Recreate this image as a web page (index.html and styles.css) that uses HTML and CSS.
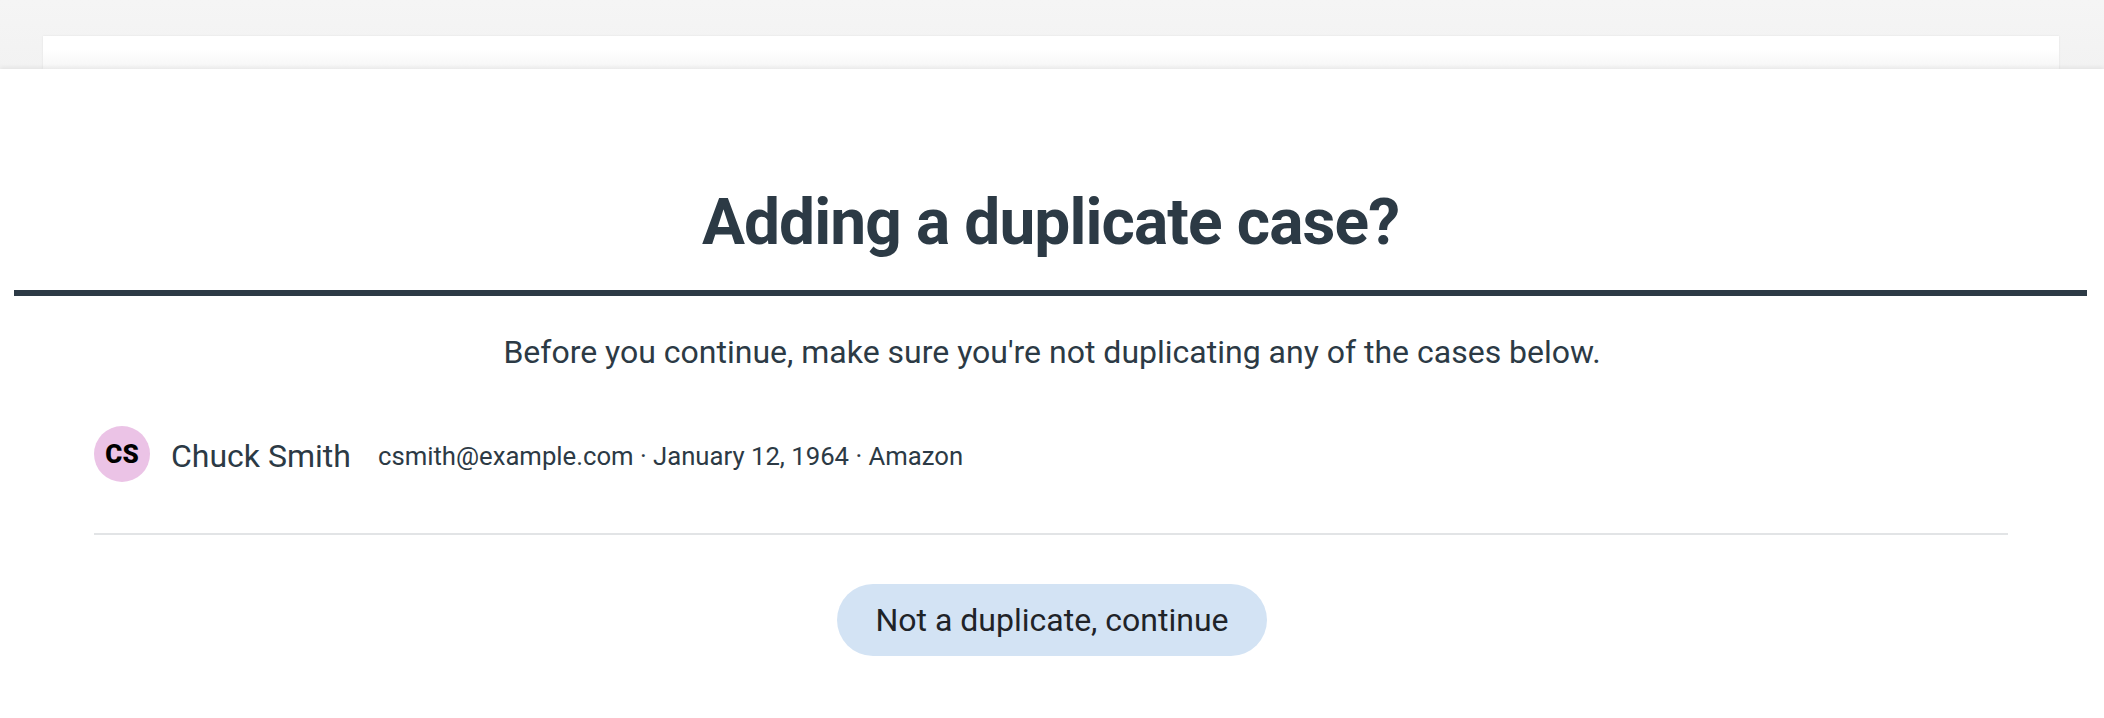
FILE: index.html
```html
<!DOCTYPE html>
<html lang="en">
<head>
<meta charset="utf-8">
<title>Adding a duplicate case?</title>
<link rel="stylesheet" href="styles.css">
</head>
<body>
<div class="backdrop">
  <div class="page-card"></div>
</div>
<main class="sheet">
  <h1 class="title">Adding a duplicate case?</h1>
  <p class="lead">Before you continue, make sure you're not duplicating any of the cases below.</p>
  <ul class="cases">
    <li class="case">
      <span class="avatar">CS</span>
      <span class="name">Chuck Smith</span>
      <span class="meta">csmith@example.com · January 12, 1964 · Amazon</span>
    </li>
  </ul>
  <div class="actions">
    <button class="btn" type="button">Not a duplicate, continue</button>
  </div>
</main>
</body>
</html>
```

FILE: styles.css
```css
* { box-sizing: border-box; }
html, body { margin: 0; padding: 0; }
body {
  background: #f4f4f4;
  font-family: Roboto, "Liberation Sans", Arial, sans-serif;
  color: #2c3a45;
  height: 718px;
  overflow: hidden;
}
.backdrop {
  height: 69px;
  padding: 36px 45px 0 43px;
  background: linear-gradient(#f5f5f5, #f2f2f2);
}
.page-card {
  height: 33px;
  background: linear-gradient(#ffffff 40%, #f6f6f6);
  box-shadow: 0 0 2px rgba(0,0,0,0.08);
}
.sheet {
  position: relative;
  background: #ffffff;
  height: 649px;
  padding-top: 115px;
  box-shadow: 0 -2px 4px rgba(0,0,0,0.06);
}
.title {
  margin: 0 17px 0 14px;
  padding-bottom: 29px;
  border-bottom: 6px solid #2c3a45;
  font-size: 64px;
  line-height: 77px;
  font-weight: 700;
  text-align: center;
  color: #2c3a45;
  letter-spacing: -0.9px;
}
.lead {
  margin: 37px 0 0;
  font-size: 32px;
  line-height: 38px;
  text-align: center;
  color: #2c3a45;
}
.cases {
  list-style: none;
  margin: 55px 96px 0 94px;
  padding: 0 0 51px;
  border-bottom: 2px solid #e2e4e6;
}
.case {
  display: flex;
  align-items: center;
  height: 56px;
}
.avatar {
  flex: none;
  width: 56px;
  height: 56px;
  border-radius: 50%;
  background: #ebc3e6;
  color: #000000;
  font-weight: 900;
  font-size: 26px;
  display: flex;
  align-items: center;
  justify-content: center;
  letter-spacing: 0.2px;
}
.name {
  margin-left: 21px;
  margin-top: 3px;
  font-size: 32px;
  color: #2c3a45;
}
.meta {
  margin-left: 27px;
  margin-top: 3px;
  font-size: 25.7px;
  color: #2c3a45;
}
.actions {
  display: flex;
  justify-content: center;
  margin-top: 49px;
}
.btn {
  height: 72px;
  width: 430px;
  border: 0;
  border-radius: 36px;
  background: #d3e3f4;
  color: #1f2328;
  font-family: Roboto, "Liberation Sans", Arial, sans-serif;
  font-size: 32px;
  padding: 0;
  cursor: pointer;
}
```
